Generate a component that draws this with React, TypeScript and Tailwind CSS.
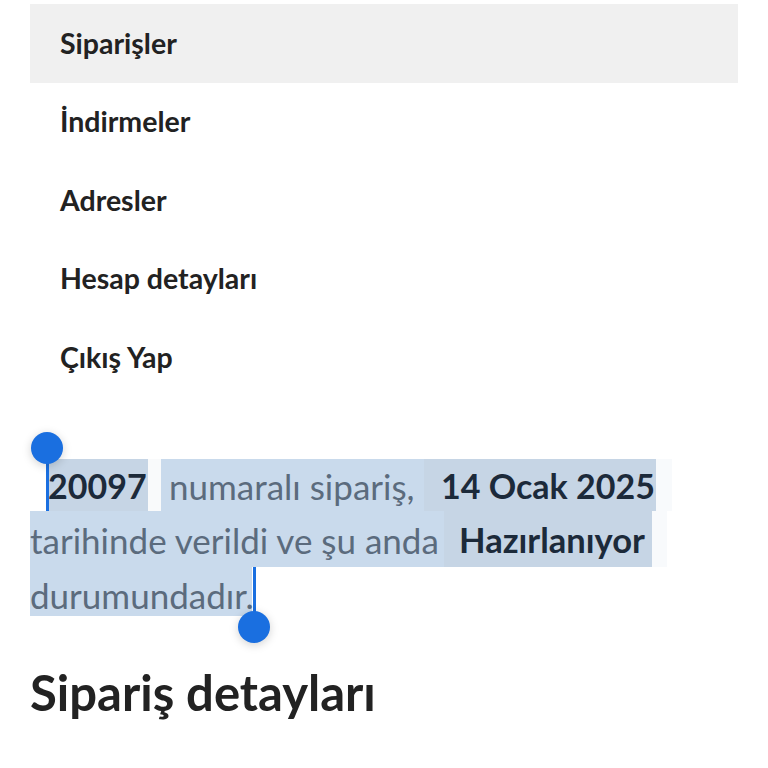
import React from "react";

const navItems = ["Siparişler", "İndirmeler", "Adresler", "Hesap detayları", "Çıkış Yap"];

export default function App() {
  return (
    <div className="relative w-[768px] h-[768px] overflow-hidden bg-white font-['Lato','Noto_Sans',sans-serif]">
      <nav className="pt-[4px] px-[30px]">
        {navItems.map((item, i) => (
          <div
            key={item}
            className={`h-[78.5px] flex items-center pl-[30px] text-[28.5px] font-bold text-[#222222] ${
              i === 0 ? "bg-[#f0f0f0]" : ""
            }`}
          >
            {item}
          </div>
        ))}
      </nav>

      <div className="relative mt-[62.5px] px-[30px] text-[35px] text-[#5b6b7d]">
        <div className="flex h-[52px] leading-[54px] whitespace-nowrap">
          <span className="w-[17px]" />
          <span className="w-[101px] pl-[1px] bg-[#c6d5e5] font-bold text-[34px] text-[#1c2a3a]">20097</span>
          <span className="w-[13px] bg-[#f9fafb]" />
          <span className="w-[263px] pl-[8px] bg-[#c9daec]">numaralı sipariş,</span>
          <span className="w-[232px] pl-[17px] bg-[#c6d5e5] font-bold text-[34px] text-[#1c2a3a]">14 Ocak 2025</span>
          <span className="w-[16px] bg-[#f8fafc]" />
        </div>
        <div className="flex h-[56px] leading-[58px] whitespace-nowrap">
          <span className="w-[414px] bg-[#c9daec]">tarihinde verildi ve şu anda</span>
          <span className="w-[208px] pl-[15px] bg-[#c6d5e5] font-bold text-[34.5px] text-[#1c2a3a]">Hazırlanıyor</span>
          <span className="w-[15px] bg-[#f8fafc]" />
        </div>
        <div className="flex h-[49px] leading-[57px] whitespace-nowrap">
          <span className="w-[222px] bg-[#c9daec]">durumundadır.</span>
        </div>

        {/* selection handles */}
        <div className="absolute left-[45.5px] top-[-11px] w-[3px] h-[63px] bg-[#1a6fe0]" />
        <div className="absolute left-[31px] top-[-27px] w-[32px] h-[32px] rounded-full bg-[#1a6fe0] shadow-[0_2px_10px_rgba(0,0,0,0.18)]" />
        <div className="absolute left-[252.5px] top-[108px] w-[3px] h-[52px] bg-[#1a6fe0]" />
        <div className="absolute left-[238px] top-[152px] w-[32px] h-[32px] rounded-full bg-[#1a6fe0] shadow-[0_2px_10px_rgba(0,0,0,0.18)]" />
      </div>

      <h2 className="mt-[47px] px-[30px] text-[49px] leading-[1.2] font-bold text-[#222222]">
        Sipariş detayları
      </h2>
    </div>
  );
}
